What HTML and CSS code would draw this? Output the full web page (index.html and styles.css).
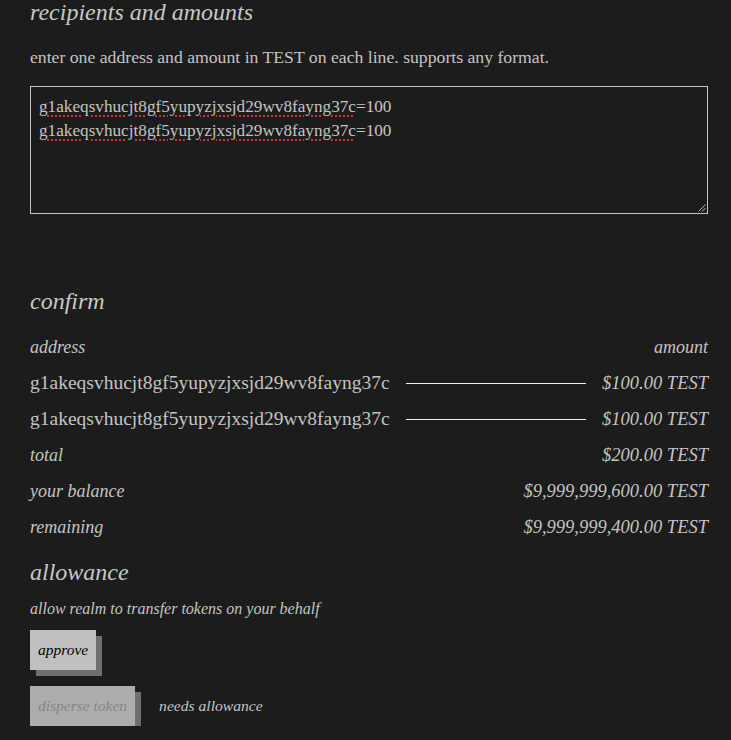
FILE: index.html
```html
<!DOCTYPE html>
<html lang="en">
<head>
<meta charset="utf-8">
<title>disperse</title>
<link rel="stylesheet" href="styles.css">
</head>
<body>
<main class="page">
  <section class="recipients">
    <h2 class="heading heading-top">recipients and amounts</h2>
    <p class="hint">enter one address and amount in TEST on each line. supports any format.</p>
    <div class="textbox" role="textbox" aria-multiline="true">
      <div class="tb-line"><span class="misspelled">g1akeqsvhucjt8gf5yupyzjxsjd29wv8fayng37c</span>=100</div>
      <div class="tb-line"><span class="misspelled">g1akeqsvhucjt8gf5yupyzjxsjd29wv8fayng37c</span>=100</div>
      <svg class="grip" width="9" height="9" viewBox="0 0 9 9" aria-hidden="true">
        <path d="M8.5 1.5 L1.5 8.5 M8.5 5 L5 8.5" stroke="#b8b8b8" stroke-width="1" fill="none"/>
      </svg>
    </div>
  </section>

  <section class="confirm">
    <h2 class="heading">confirm</h2>
    <div class="row row-head">
      <span class="cell-addr">address</span>
      <span class="cell-amt">amount</span>
    </div>
    <div class="row">
      <span class="addr">g1akeqsvhucjt8gf5yupyzjxsjd29wv8fayng37c</span>
      <span class="rule"></span>
      <span class="amt">$100.00 TEST</span>
    </div>
    <div class="row">
      <span class="addr">g1akeqsvhucjt8gf5yupyzjxsjd29wv8fayng37c</span>
      <span class="rule"></span>
      <span class="amt">$100.00 TEST</span>
    </div>
    <div class="row row-sum">
      <span class="label">total</span>
      <span class="amt">$200.00 TEST</span>
    </div>
    <div class="row row-sum">
      <span class="label">your balance</span>
      <span class="amt">$9,999,999,600.00 TEST</span>
    </div>
    <div class="row row-sum">
      <span class="label">remaining</span>
      <span class="amt">$9,999,999,400.00 TEST</span>
    </div>
  </section>

  <section class="allowance">
    <h2 class="heading">allowance</h2>
    <p class="note">allow realm to transfer tokens on your behalf</p>
    <div class="actions">
      <button class="btn" type="button">approve</button>
    </div>
    <div class="actions">
      <button class="btn" type="button" disabled>disperse token</button>
      <span class="status">needs allowance</span>
    </div>
  </section>
</main>
</body>
</html>
```

FILE: styles.css
```css
html, body {
  margin: 0;
  padding: 0;
  background: #1c1c1c;
}

body {
  color: #c4c4c4;
  font-family: "Liberation Serif", "DejaVu Serif", serif;
  font-size: 17px;
}

.page {
  padding: 0 23px 0 30px;
}

.heading {
  margin: 0;
  font-style: italic;
  font-weight: normal;
  font-size: 24px;
  line-height: 30px;
  color: #c8c8c8;
}

.heading-top {
  margin-top: -3px;
}

.hint {
  margin: 18px 0 0;
  font-size: 17.7px;
  line-height: 24px;
}

.textbox {
  box-sizing: border-box;
  position: relative;
  margin-top: 17px;
  height: 128px;
  border: 1px solid #c4c4c4;
  padding: 8px 8px 0;
  font-size: 17.2px;
  line-height: 24px;
  color: #c4c4c4;
}

.misspelled {
  text-decoration: underline dotted #d03030;
  text-decoration-thickness: 2px;
  text-underline-offset: 3px;
}

.grip {
  position: absolute;
  right: 1px;
  bottom: 1px;
}

.confirm {
  margin-top: 72px;
}

.row {
  display: flex;
  align-items: center;
  height: 36px;
  font-size: 19.5px;
}

.row-head {
  margin-top: 13px;
  font-style: italic;
  font-size: 18px;
  justify-content: space-between;
}

.row-sum {
  justify-content: space-between;
  font-style: italic;
}

.addr {
  white-space: nowrap;
}

.rule {
  flex: 1;
  margin: 0 16px;
  border-top: 1px solid #f0f0f0;
}

.amt {
  font-style: italic;
  font-size: 18.5px;
  white-space: nowrap;
}

.label {
  font-style: italic;
  font-size: 18px;
}

.allowance {
  margin-top: 12px;
}

.note {
  margin: 10px 0 0;
  font-style: italic;
  font-size: 16px;
  line-height: 24px;
}

.actions {
  display: flex;
  align-items: center;
  gap: 24px;
  margin-top: 9px;
}

.actions + .actions {
  margin-top: 16px;
}

.btn {
  height: 40px;
  padding: 0 8px;
  border: none;
  border-radius: 0;
  background: #c0c0c0;
  color: #000;
  font-family: inherit;
  font-style: italic;
  font-size: 15.5px;
  box-shadow: 6px 6px 0 #6f6f6f;
}

.btn:disabled {
  background: #adadad;
  color: #858585;
}

.status {
  font-style: italic;
  font-size: 15.6px;
}
```
